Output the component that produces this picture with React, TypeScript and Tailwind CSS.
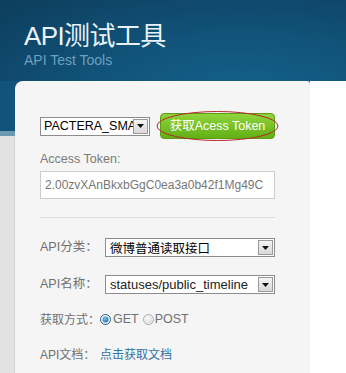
import React from "react";

const font = { fontFamily: '"Liberation Sans", "Noto Sans CJK SC", sans-serif' };

function Arrow() {
  return (
    <div className="w-[15px] h-[15px] border border-[#9a9a9a] bg-gradient-to-b from-[#f4f4f4] to-[#d8d8d8] flex items-center justify-center shrink-0">
      <svg width="7" height="4" viewBox="0 0 7 4">
        <polygon points="0,0 7,0 3.5,4" fill="#111" />
      </svg>
    </div>
  );
}

function Radio({ checked }: { checked?: boolean }) {
  return (
    <svg width="11" height="11" viewBox="0 0 11 11" className="shrink-0">
      <defs>
        <radialGradient id={checked ? "rc" : "ru"} cx="0.4" cy="0.35" r="0.7">
          <stop offset="0" stopColor={checked ? "#7ec8f0" : "#ffffff"} />
          <stop offset="1" stopColor={checked ? "#1f6fa8" : "#d8d8d8"} />
        </radialGradient>
      </defs>
      <circle cx="5.5" cy="5.5" r="5" fill="#f2f2f2" stroke={checked ? "#2a5f86" : "#a8a8a8"} strokeWidth="1" />
      {checked ? <circle cx="5.5" cy="5.5" r="3" fill="url(#rc)" /> : <circle cx="5.5" cy="5.5" r="3.5" fill="url(#ru)" />}
    </svg>
  );
}

export default function App() {
  return (
    <div className="w-[346px] h-[373px] overflow-hidden bg-white flex flex-col" style={font}>
      <div className="h-[81px] shrink-0 bg-[radial-gradient(ellipse_at_70%_120%,#14628a_0%,#11537a_45%,#0d3d5c_100%)] pl-[24px] pt-[22px]">
        <div className="text-[26px] leading-[28px] text-[#e8f3f9] tracking-[-0.6px]">API测试工具</div>
        <div className="text-[14px] leading-[15px] text-[#6f9fbd] mt-[3px]">API Test Tools</div>
      </div>
      <div className="flex flex-1 min-h-0">
        <div className="w-[15px] shrink-0 flex flex-col">
          <div className="h-[50px] bg-[#11537a]" />
          <div className="h-[5px] bg-[#6d9ab2]" />
          <div className="flex-1 bg-[#e2e2e2] border-r border-[#d2d2d2]" />
        </div>
        <div className="w-[295px] shrink-0 flex flex-col bg-[linear-gradient(to_bottom,#11537a_0px,#11537a_8px,#ffffff_8px)]">
          <div className="flex-1 bg-[#f5f5f5] rounded-tl-[8px] rounded-tr-[3px] pl-[25px] pt-[32px] flex flex-col">
            <div className="flex items-center">
              <div className="w-[110px] h-[19px] bg-white border border-[#8c8c8c] flex items-center pl-[3px] pr-[1px]">
                <span className="flex-1 overflow-hidden whitespace-nowrap text-[12.5px] text-black leading-[16px]">PACTERA_SMA</span>
                <Arrow />
              </div>
              <div className="relative ml-[10px]">
                <div className="w-[115px] h-[26px] rounded-[4px] border border-[#5c9e12] bg-gradient-to-b from-[#8fd43a] to-[#62b014] flex items-center justify-center text-white text-[12.5px]">
                  获取Acess Token
                </div>
                <svg className="absolute -left-[4px] -top-[3px]" width="123" height="32" viewBox="0 0 123 32">
                  <ellipse cx="61.5" cy="16" rx="60.5" ry="14.5" fill="none" stroke="#b5282c" strokeWidth="1" />
                </svg>
              </div>
            </div>
            <div className="mt-[13px] text-[12.5px] leading-[14px] text-[#7a7a7a]">Access Token:</div>
            <div className="mt-[5px] w-[235px] h-[28px] bg-white border border-[#cccccc] flex items-center pl-[4px] text-[12px] text-[#777]">
              2.00zvXAnBkxbGgC0ea3a0b42f1Mg49C
            </div>
            <div className="mt-[18px] w-[235px] h-px bg-[#dcdcdc]" />
            <div className="mt-[20px] flex items-center h-[19px]">
              <span className="w-[65px] shrink-0 whitespace-nowrap text-[12.5px] text-[#707070]">API分类：</span>
              <div className="w-[170px] h-[19px] bg-white border border-[#8c8c8c] flex items-center pl-[4px] pr-[1px]">
                <span className="flex-1 text-[12.5px] text-black leading-[16px]" style={{ fontFamily: '"Noto Sans CJK SC", sans-serif' }}>微博普通读取接口</span>
                <Arrow />
              </div>
            </div>
            <div className="mt-[18px] flex items-center h-[19px]">
              <span className="w-[65px] shrink-0 whitespace-nowrap text-[12.5px] text-[#707070]">API名称：</span>
              <div className="w-[170px] h-[19px] bg-white border border-[#8c8c8c] flex items-center pl-[4px] pr-[1px]">
                <span className="flex-1 text-[13px] text-[#222] leading-[16px]">statuses/public_timeline</span>
                <Arrow />
              </div>
            </div>
            <div className="mt-[16px] flex items-center h-[19px] text-[12px] text-[#707070] whitespace-nowrap">
              <span className="w-[60px] shrink-0">获取方式：</span>
              <Radio checked />
              <span className="ml-[2px] text-[12.5px]">GET</span>
              <span className="ml-[4px] flex"><Radio /></span>
              <span className="ml-[1px] text-[12.5px]">POST</span>
            </div>
            <div className="mt-[16px] flex items-center h-[19px] text-[12px] whitespace-nowrap">
              <span className="w-[60px] shrink-0 text-[#707070]">API文档：</span>
              <span className="text-[#2f72a6]">点击获取文档</span>
            </div>
          </div>
        </div>
        <div className="flex-1 bg-white" />
      </div>
    </div>
  );
}
